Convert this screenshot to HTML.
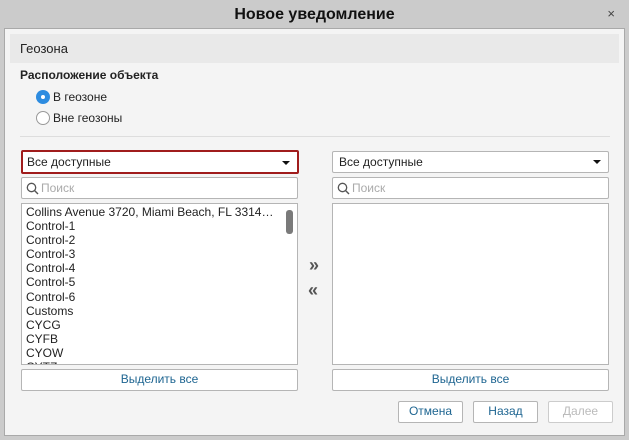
<!DOCTYPE html>
<html><head><meta charset="utf-8"><style>
*{box-sizing:border-box;margin:0;padding:0}
body{width:629px;height:440px;background:#cbcbcb;font-family:"Liberation Sans",sans-serif;font-size:12px;color:#222;position:relative;overflow:hidden}
.a{position:absolute}
.title{left:0;top:0;width:629px;height:28px;text-align:center;font-weight:bold;font-size:16px;line-height:29px;color:#111}
.main{left:4px;top:28px;width:621px;height:408px;background:#f4f4f4;border:1px solid #a9a9a9}
.box{background:#fff;border:1px solid #b5b5b5;border-radius:2px}
.btn{background:#fff;border:1px solid #b5b5b5;border-radius:2px;text-align:center;color:#1e6591;line-height:19px}
.item{line-height:14.1px;height:14.1px}
.caret{position:absolute;right:7px;top:9px;width:0;height:0;border-left:4px solid transparent;border-right:4px solid transparent;border-top:4px solid #111}
</style></head><body>
<div class="a title">Новое уведомление</div>
<div class="a" style="right:14px;top:6px;font-size:13px;color:#444">×</div>
<div class="a main"></div>
<div class="a" style="left:10px;top:34px;width:609px;height:29px;background:#e9e9e9;font-size:13px;line-height:29px;padding-left:10px">Геозона</div>
<div class="a" style="left:20px;top:68px;font-weight:bold;line-height:14px">Расположение объекта</div>
<div class="a" style="left:36px;top:90px;width:14px;height:14px;border-radius:50%;background:#2d8ce0"><div class="a" style="left:5px;top:5px;width:4px;height:4px;border-radius:50%;background:#fff"></div></div>
<div class="a" style="left:53px;top:90px;line-height:14px">В геозоне</div>
<div class="a" style="left:36px;top:111px;width:14px;height:14px;border-radius:50%;background:#fff;border:1px solid #999"></div>
<div class="a" style="left:53px;top:111px;line-height:14px">Вне геозоны</div>
<div class="a" style="left:20px;top:136px;width:590px;height:1px;background:#ddd"></div>

<div class="a box" style="left:21px;top:150px;width:278px;height:24px;border:2px solid #a01c1c;padding-left:4px;line-height:20px">Все доступные<div class="caret"></div></div>
<div class="a box" style="left:21px;top:177px;width:277px;height:22px;padding-left:19px;line-height:20px;color:#aaa"><svg class="a" style="left:4px;top:4px" width="13" height="13"><circle cx="5.5" cy="5.5" r="4.2" fill="none" stroke="#555" stroke-width="1.3"/><line x1="8.5" y1="8.5" x2="12" y2="12" stroke="#555" stroke-width="1.4"/></svg>Поиск</div>
<div class="a box" style="left:21px;top:203px;width:277px;height:162px;padding:1px 0 0 4px;overflow:hidden;font-size:12px;border-radius:0">
<div class="item">Collins Avenue 3720, Miami Beach, FL 3314…</div>
<div class="item">Control-1</div><div class="item">Control-2</div><div class="item">Control-3</div><div class="item">Control-4</div><div class="item">Control-5</div><div class="item">Control-6</div><div class="item">Customs</div><div class="item">CYCG</div><div class="item">CYFB</div><div class="item">CYOW</div><div class="item">CYTZ</div>
<div class="a" style="right:4px;top:6px;width:7px;height:24px;border-radius:3px;background:#7a7a7a"></div>
</div>
<div class="a btn" style="left:21px;top:369px;width:277px;height:22px">Выделить все</div>

<div class="a" style="left:309px;top:255px;font-size:18px;font-weight:bold;color:#555">»</div>
<div class="a" style="left:308px;top:280px;font-size:18px;font-weight:bold;color:#555">«</div>

<div class="a box" style="left:332px;top:151px;width:277px;height:22px;padding-left:6px;line-height:20px">Все доступные<div class="caret" style="top:8px"></div></div>
<div class="a box" style="left:332px;top:177px;width:277px;height:22px;padding-left:19px;line-height:20px;color:#aaa"><svg class="a" style="left:4px;top:4px" width="13" height="13"><circle cx="5.5" cy="5.5" r="4.2" fill="none" stroke="#555" stroke-width="1.3"/><line x1="8.5" y1="8.5" x2="12" y2="12" stroke="#555" stroke-width="1.4"/></svg>Поиск</div>
<div class="a box" style="left:332px;top:203px;width:277px;height:162px;border-radius:0"></div>
<div class="a btn" style="left:332px;top:369px;width:277px;height:22px">Выделить все</div>

<div class="a btn" style="left:398px;top:401px;width:65px;height:22px">Отмена</div>
<div class="a btn" style="left:473px;top:401px;width:65px;height:22px">Назад</div>
<div class="a btn" style="left:548px;top:401px;width:65px;height:22px;color:#bbb;border-color:#ccc">Далее</div>
</body></html>
